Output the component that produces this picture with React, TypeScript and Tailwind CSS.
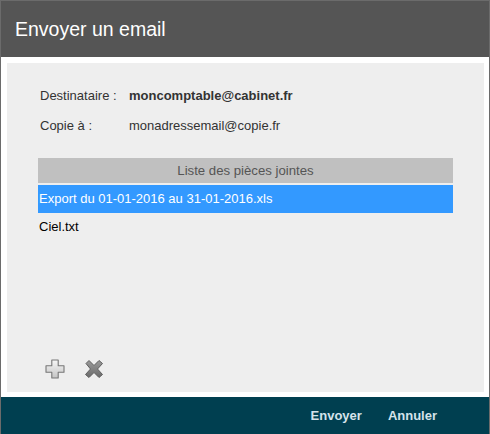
import React from "react";

const attachments = ["Export du 01-01-2016 au 31-01-2016.xls", "Ciel.txt"];

const PlusIcon = () => (
  <svg width="20" height="20" viewBox="0 0 20 20">
    <defs>
      <linearGradient id="pg" x1="0" y1="0" x2="0" y2="1">
        <stop offset="0" stopColor="#f7f7f7" />
        <stop offset="1" stopColor="#c4c4c4" />
      </linearGradient>
    </defs>
    <path
      d="M6.8 1h6.4v5.8H19v6.4h-5.8V19H6.8v-5.8H1V6.8h5.8z"
      fill="url(#pg)"
      stroke="#777777"
      strokeWidth="1.1"
      strokeLinejoin="round"
    />
  </svg>
);

const CrossIcon = () => (
  <svg width="22" height="20" viewBox="0 0 22 20">
    <defs>
      <linearGradient id="xg" x1="0" y1="0" x2="0" y2="1">
        <stop offset="0" stopColor="#9a9a9a" />
        <stop offset="1" stopColor="#6a6a6a" />
      </linearGradient>
    </defs>
    <path
      d="M3 4.5L6 1.5L11 6.5L16 1.5L19.5 4.5L14.5 10L19.5 15.5L16 18.5L11 13.5L6 18.5L2.5 15.5L7.5 10z"
      fill="url(#xg)"
      stroke="#5e5e5e"
      strokeWidth="1"
      strokeLinejoin="round"
    />
  </svg>
);

export default function App() {
  return (
    <div
      className="w-[490px] h-[434px] flex flex-col border-x border-t border-[#6b6b6b] bg-white"
      style={{ fontFamily: "'Liberation Sans', Arial, sans-serif" }}
    >
      <div className="h-[56px] bg-[#555555] flex items-center pl-[14px]">
        <h1 className="text-[19.5px] text-white pt-[2px]">Envoyer un email</h1>
      </div>
      <div className="flex-1 p-[6px] pb-[5px] flex">
        <div className="flex-1 bg-[#eeeeee] flex flex-col pt-[24px] px-[31px] pb-[13px]">
          <div className="flex items-center h-[18px] text-[13px] text-[#333]">
            <span className="w-[91px] pl-[2px]">Destinataire :</span>
            <span className="font-bold">moncomptable@cabinet.fr</span>
          </div>
          <div className="flex items-center h-[18px] mt-[12px] text-[13px] text-[#333]">
            <span className="w-[91px] pl-[2px]">Copie à :</span>
            <span>monadressemail@copie.fr</span>
          </div>
          <div className="mt-[23px] w-[415px]">
            <div className="h-[25px] bg-[#c0c0c0] flex items-center justify-center text-[13.2px] text-[#555]">
              Liste des pièces jointes
            </div>
            <div className="mt-[2px] flex flex-col text-[13px]">
              {attachments.map((a, i) => (
                <div
                  key={a}
                  className={
                    i === 0
                      ? "h-[28px] flex items-center px-[1px] bg-[#3399ff] text-white"
                      : "h-[28px] flex items-center px-[1px] text-black"
                  }
                >
                  {a}
                </div>
              ))}
            </div>
          </div>
          <div className="mt-auto flex items-center gap-[18px] pl-[7px]">
            <PlusIcon />
            <CrossIcon />
          </div>
        </div>
      </div>
      <div className="h-[37px] bg-[#003f50] flex items-center justify-end pr-[52px] gap-[26px] text-[13px] font-bold text-[#d5e3ea]">
        <span>Envoyer</span>
        <span>Annuler</span>
      </div>
    </div>
  );
}
